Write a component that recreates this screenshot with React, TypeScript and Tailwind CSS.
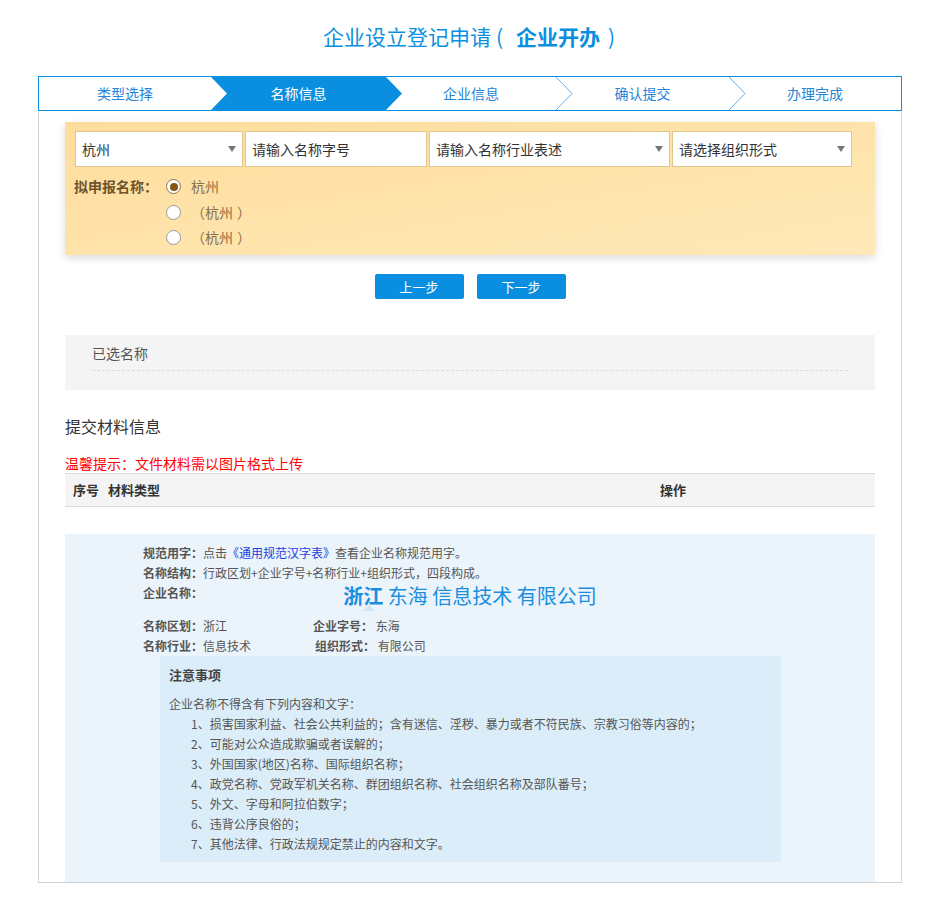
import { ReactNode } from 'react';

const steps = [
  { label: '类型选择', w: 'w-[172px]' },
  { label: '名称信息', w: 'w-[175px]', active: true },
  { label: '企业信息', w: 'w-[170px]' },
  { label: '确认提交', w: 'w-[173px]' },
  { label: '办理完成', w: 'w-[172px]' },
];

const rules = [
  '1、损害国家利益、社会公共利益的；含有迷信、淫秽、暴力或者不符民族、宗教习俗等内容的；',
  '2、可能对公众造成欺骗或者误解的；',
  '3、外国国家(地区)名称、国际组织名称；',
  '4、政党名称、党政军机关名称、群团组织名称、社会组织名称及部队番号；',
  '5、外文、字母和阿拉伯数字；',
  '6、违背公序良俗的；',
  '7、其他法律、行政法规规定禁止的内容和文字。',
];

function StepBar() {
  return (
    <div className="relative h-[35px] border border-[#0a8fe0]">
      <svg className="absolute inset-0 w-full h-full" viewBox="0 0 862 33" preserveAspectRatio="none">
        <polygon points="172,0 347,0 363,16.5 347,33 172,33 188,16.5" fill="#0a8fe0" />
        <polyline points="517,0 533,16.5 517,33" fill="none" stroke="#5eaee8" strokeWidth="1" />
        <polyline points="690,0 706,16.5 690,33" fill="none" stroke="#5eaee8" strokeWidth="1" />
      </svg>
      <div className="relative flex h-full">
        {steps.map((s) => (
          <div
            key={s.label}
            className={`${s.w} flex items-center justify-center text-[14px] ${s.active ? 'text-white' : 'text-[#2585d8]'}`}
          >
            {s.label}
          </div>
        ))}
      </div>
    </div>
  );
}

function Caret() {
  return <span className="w-0 h-0 border-l-[4px] border-r-[4px] border-t-[6px] border-l-transparent border-r-transparent border-t-[#777]" />;
}

function Field({ w, text, select }: { w: string; text: string; select?: boolean }) {
  return (
    <div className={`${w} h-[36px] bg-white border border-[#e1c68c] flex items-center justify-between pl-[6px] pr-[6px] text-[14px] text-[#333]`}>
      <span>{text}</span>
      {select && <Caret />}
    </div>
  );
}

function Radio({ checked, children }: { checked?: boolean; children: ReactNode }) {
  return (
    <div className="h-[25.5px] flex items-center">
      <span className={`w-[15px] h-[15px] rounded-full bg-white border flex items-center justify-center ${checked ? 'border-[#8c7552]' : 'border-[#9a9a9a]'}`}>
        {checked && <span className="w-[8px] h-[8px] rounded-full bg-[#87560f]" />}
      </span>
      <span className="ml-[10px] text-[14px] text-[#8a6f48]">{children}</span>
    </div>
  );
}

export default function App() {
  return (
    <div className="min-h-screen bg-white font-['Noto_Sans_CJK_SC',sans-serif] pb-[15px]">
      <div className="w-[864px] ml-[38px]">
        <h1 className="h-[76px] pt-[22px] leading-[28px] text-center text-[21px] text-[#0a8fe0] font-normal">
          企业设立登记申请
          <span className="inline-block w-[25px] pl-[5px] text-left">(</span>
          <b className="font-bold">企业开办</b>
          <span className="inline-block w-[17px] pl-[8px] text-left">)</span>
        </h1>

        <StepBar />

        <div className="border border-t-0 border-[#d4d4d4] px-[26px] pt-[11px]">
          {/* name form */}
          <div className="h-[133px] pl-[10px] pt-[9px] bg-gradient-to-br from-[#fedd9c] to-[#ffe9b8] shadow-[0_3px_8px_rgba(0,0,0,0.14)]">
            <div className="flex gap-[2px]">
              <Field w="w-[168px]" text="杭州" select />
              <Field w="w-[182px]" text="请输入名称字号" />
              <Field w="w-[241px]" text="请输入名称行业表述" select />
              <Field w="w-[180px]" text="请选择组织形式" select />
            </div>
            <div className="flex mt-[7px]">
              <div className="w-[92px] h-[25.5px] leading-[25.5px] text-[14px] font-bold text-[#6e532c] -ml-[1px]">拟申报名称：</div>
              <div className="flex flex-col">
                <Radio checked>杭州</Radio>
                <Radio>（杭州<span className="ml-[4px]">）</span></Radio>
                <Radio>（杭州<span className="ml-[4px]">）</span></Radio>
              </div>
            </div>
          </div>

          <div className="flex justify-center gap-[13px] mt-[19px]">
            <button className="w-[89px] h-[25px] rounded-[2px] bg-[#0a8fe0] text-white text-[13px]">上一步</button>
            <button className="w-[89px] h-[25px] rounded-[2px] bg-[#0a8fe0] text-white text-[13px]">下一步</button>
          </div>

          {/* selected name */}
          <div className="mt-[36px] h-[55px] bg-[#f4f4f4]">
            <div className="mx-[27px] pt-[8px] pb-[7px] leading-[20px] text-[14px] text-[#555] border-b border-dashed border-[#dcdcdc]">
              已选名称
            </div>
          </div>

          <div className="mt-[26px] text-[16px] leading-[20px] text-[#333]">提交材料信息</div>
          <div className="mt-[17px] text-[14px] leading-[20px] text-[#ff0000]">温馨提示：文件材料需以图片格式上传</div>

          <div className="h-[34px] flex items-center bg-[#f4f4f4] border-y border-[#dcdcdc] text-[13px] font-bold text-[#333]">
            <span className="pl-[8px] w-[43px]">序号</span>
            <span className="w-[552px]">材料类型</span>
            <span>操作</span>
          </div>

          {/* naming guide */}
          <div className="mt-[27px] bg-[#ebf4fb] pl-[78px] pr-[78px] pt-[9px] pb-[20px] text-[12px] text-[#555]">
            <div className="leading-[20px]">
              <b>规范用字：</b>点击<span className="text-[#1c3fe0]">《通用规范汉字表》</span>查看企业名称规范用字。
            </div>
            <div className="leading-[20px]">
              <b>名称结构：</b>行政区划+企业字号+名称行业+组织形式，四段构成。
            </div>
            <div className="flex h-[26px]">
              <b className="w-[60px] leading-[20px]">企业名称：</b>
              <div className="flex-1 text-center text-[20px] leading-[26px] text-[#1c8ee0] whitespace-nowrap">
                <span className="relative font-bold">
                  浙江
                  <span className="absolute left-[20px] top-[24px] w-0 h-0 border-l-[6px] border-r-[6px] border-b-[6px] border-l-transparent border-r-transparent border-b-[#d0e6f7]" />
                </span>{' '}
                东海 信息技术 有限公司
              </div>
              <div className="w-[60px]" />
            </div>
            <div className="mt-[7px] flex leading-[20px]">
              <span className="w-[170px]"><b>名称区划：</b>浙江</span>
              <span><b>企业字号：</b> 东海</span>
            </div>
            <div className="flex leading-[20px]">
              <span className="w-[172px]"><b>名称行业：</b>信息技术</span>
              <span><b>组织形式：</b> 有限公司</span>
            </div>

            <div className="ml-[17px] w-[621px] bg-[#dbedf9] pl-[9px] pt-[9px] pb-[8px] leading-[20px]">
              <div className="text-[13px] font-bold text-[#444]">注意事项</div>
              <div className="mt-[9px]">企业名称不得含有下列内容和文字：</div>
              <div className="pl-[22px]">
                {rules.map((r) => (
                  <div key={r}>{r}</div>
                ))}
              </div>
            </div>
          </div>
        </div>
      </div>
    </div>
  );
}
